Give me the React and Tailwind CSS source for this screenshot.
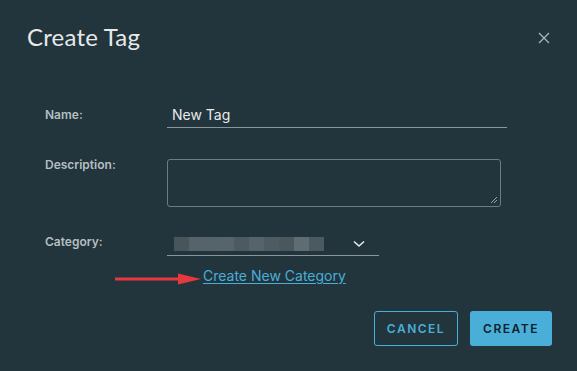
import React from "react";

const blur = ["#48565c", "#56646a", "#55636a", "#56646b", "#4d5b61", "#55636a", "#4e5c62", "#4a585e", "#5f6d73", "#4b5a60"];

const App = () => {
  return (
    <div className="w-[577px] h-[371px] bg-[#22343c] text-[#e8eaeb] font-['Inter',sans-serif] flex flex-col">
      {/* Header */}
      <div className="flex items-center justify-between pl-[27px] pr-[27px] pt-[22px]">
        <h1 className="text-[24px] font-normal font-['Lato',sans-serif] tracking-[0.2px] leading-[30px] text-[#e6e9ea]">Create Tag</h1>
        <svg width="12" height="12" viewBox="0 0 12 12" className="mt-[1px]">
          <path d="M1 1 L11 11 M11 1 L1 11" stroke="#a9b5bb" strokeWidth="1.3" fill="none" />
        </svg>
      </div>

      {/* Form */}
      <div className="flex flex-col pl-[45px] mt-[53px]">
        <div className="flex items-start">
          <label className="w-[122px] text-[12px] leading-[12px] font-semibold text-[#b5bec2] pt-[4px]">Name:</label>
          <div className="w-[340px] border-b border-[#8a969c] pl-[5px] pb-[2px] text-[14px] text-[#e8eaeb] leading-[20px]">New Tag</div>
        </div>

        <div className="flex items-start mt-[31px]">
          <label className="w-[122px] text-[12px] leading-[12px] font-semibold text-[#b5bec2] pt-[0px]">Description:</label>
          <div className="relative w-[334px] h-[48px] border border-[#6f7b81] rounded-[3px]">
            <svg width="8" height="8" viewBox="0 0 8 8" className="absolute right-[2px] bottom-[2px]">
              <path d="M7 1 L1 7 M7 4 L4 7" stroke="#9aa5aa" strokeWidth="1" />
            </svg>
          </div>
        </div>

        <div className="flex items-start mt-[29px]">
          <label className="w-[122px] text-[12px] leading-[12px] font-semibold text-[#b5bec2] pt-[0px]">Category:</label>
          <div className="w-[212px] border-b border-[#8a969c] flex items-center pl-[7px] pr-[14px] pb-[4px] pt-[1px]">
            <div className="flex h-[14px]">
              {blur.map((c, i) => (
                <div key={i} className="w-[15px] h-full" style={{ backgroundColor: c }} />
              ))}
            </div>
            <div className="flex-1" />
            <svg width="12" height="8" viewBox="0 0 12 8">
              <path d="M1 1.5 L6 6 L11 1.5" stroke="#e8eaeb" strokeWidth="1.6" fill="none" />
            </svg>
          </div>
        </div>

        <div className="flex items-center mt-[10px] ml-[70px]">
          <svg width="88" height="12" viewBox="0 0 88 12" className="mt-[6px]">
            <path d="M0 6 L66 6" stroke="#e8383d" strokeWidth="3" />
            <path d="M63 0.5 L86 6 L63 11.5 Z" fill="#e8383d" />
          </svg>
          <a className="text-[14px] text-[#49afd9] underline underline-offset-[2px] leading-[20px]">Create New Category</a>
        </div>
      </div>

      {/* Footer */}
      <div className="flex justify-end gap-[12px] pr-[25px] mt-[25px]">
        <button className="w-[84px] h-[35px] border border-[#49afd9] rounded-[3px] text-[#49afd9] text-[12px] font-semibold tracking-[1.5px]">CANCEL</button>
        <button className="w-[82px] h-[35px] bg-[#49afd9] rounded-[3px] text-[#10212a] text-[12px] font-semibold tracking-[1.5px]">CREATE</button>
      </div>
    </div>
  );
};

export default App;
